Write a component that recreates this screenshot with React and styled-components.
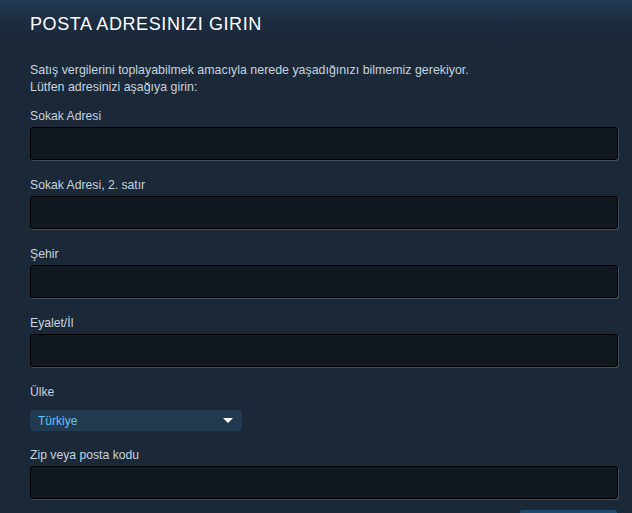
import React from "react";
import styled, { createGlobalStyle } from "styled-components";

const Global = createGlobalStyle`
  html, body { margin: 0; padding: 0; background: #1b2838; }
  body { font-family: Arial, "Liberation Sans", sans-serif; overflow: hidden; }
`;

const Page = styled.div`
  width: 632px;
  height: 513px;
  overflow: hidden;
  box-sizing: border-box;
  padding: 12px 14px 0 30px;
  background: linear-gradient(to bottom, #223b55 0px, #1d2e42 18px, #1b2838 40px);
`;

const Title = styled.h2`
  margin: 0;
  font-family: Arial, "Liberation Sans", sans-serif;
  font-size: 18px;
  font-weight: normal;
  letter-spacing: 0.6px;
  line-height: 24px;
  color: #ffffff;
`;

const Intro = styled.p`
  margin: 26px 0 0 0;
  font-size: 12.4px;
  line-height: 17px;
  color: #c6d4df;
`;

const Field = styled.div`
  display: flex;
  flex-direction: column;
  margin-top: ${(p) => p.$top || 17}px;
`;

const Label = styled.label`
  font-size: 12.2px;
  line-height: 17px;
  color: #c6d4df;
`;

const Input = styled.input`
  margin-top: 2px;
  box-sizing: border-box;
  width: 588px;
  height: 33px;
  border: 1px solid #000;
  border-radius: 3px;
  background: #121820;
  box-shadow: 1px 1px 0 rgba(255, 255, 255, 0.18);
  outline: none;
  color: #fff;
  padding: 0 8px;
`;

const Select = styled.div`
  margin-top: 9px;
  width: 212px;
  height: 21px;
  box-sizing: border-box;
  border-radius: 3px;
  background: #223a50;
  display: flex;
  align-items: center;
  justify-content: space-between;
  padding: 0 9px 0 8px;
  font-size: 12px;
  color: #67c1f5;
  cursor: pointer;
`;

const Arrow = styled.span`
  width: 0;
  height: 0;
  border-left: 5px solid transparent;
  border-right: 5px solid transparent;
  border-top: 5px solid #ffffff;
`;

const Actions = styled.div`
  display: flex;
  justify-content: flex-end;
  margin-top: 11px;
  padding-right: 1px;
`;

const Button = styled.button`
  width: 97px;
  height: 30px;
  border: none;
  border-radius: 2px;
  background: #214c6d;
  padding: 0;
`;

const fields = [
  { label: "Sokak Adresi", top: 12 },
  { label: "Sokak Adresi, 2. satır" },
  { label: "Şehir" },
  { label: "Eyalet/İl" },
];

export default function App() {
  return (
    <>
      <Global />
      <Page>
        <Title>POSTA ADRESINIZI GIRIN</Title>
        <Intro>
          Satış vergilerini toplayabilmek amacıyla nerede yaşadığınızı bilmemiz gerekiyor.
          <br />
          Lütfen adresinizi aşağıya girin:
        </Intro>
        {fields.map((f) => (
          <Field key={f.label} $top={f.top}>
            <Label>{f.label}</Label>
            <Input type="text" />
          </Field>
        ))}
        <Field>
          <Label>Ülke</Label>
          <Select>
            <span>Türkiye</span>
            <Arrow />
          </Select>
        </Field>
        <Field $top={16}>
          <Label>Zip veya posta kodu</Label>
          <Input type="text" />
        </Field>
        <Actions>
          <Button aria-label="Devam" />
        </Actions>
      </Page>
    </>
  );
}
